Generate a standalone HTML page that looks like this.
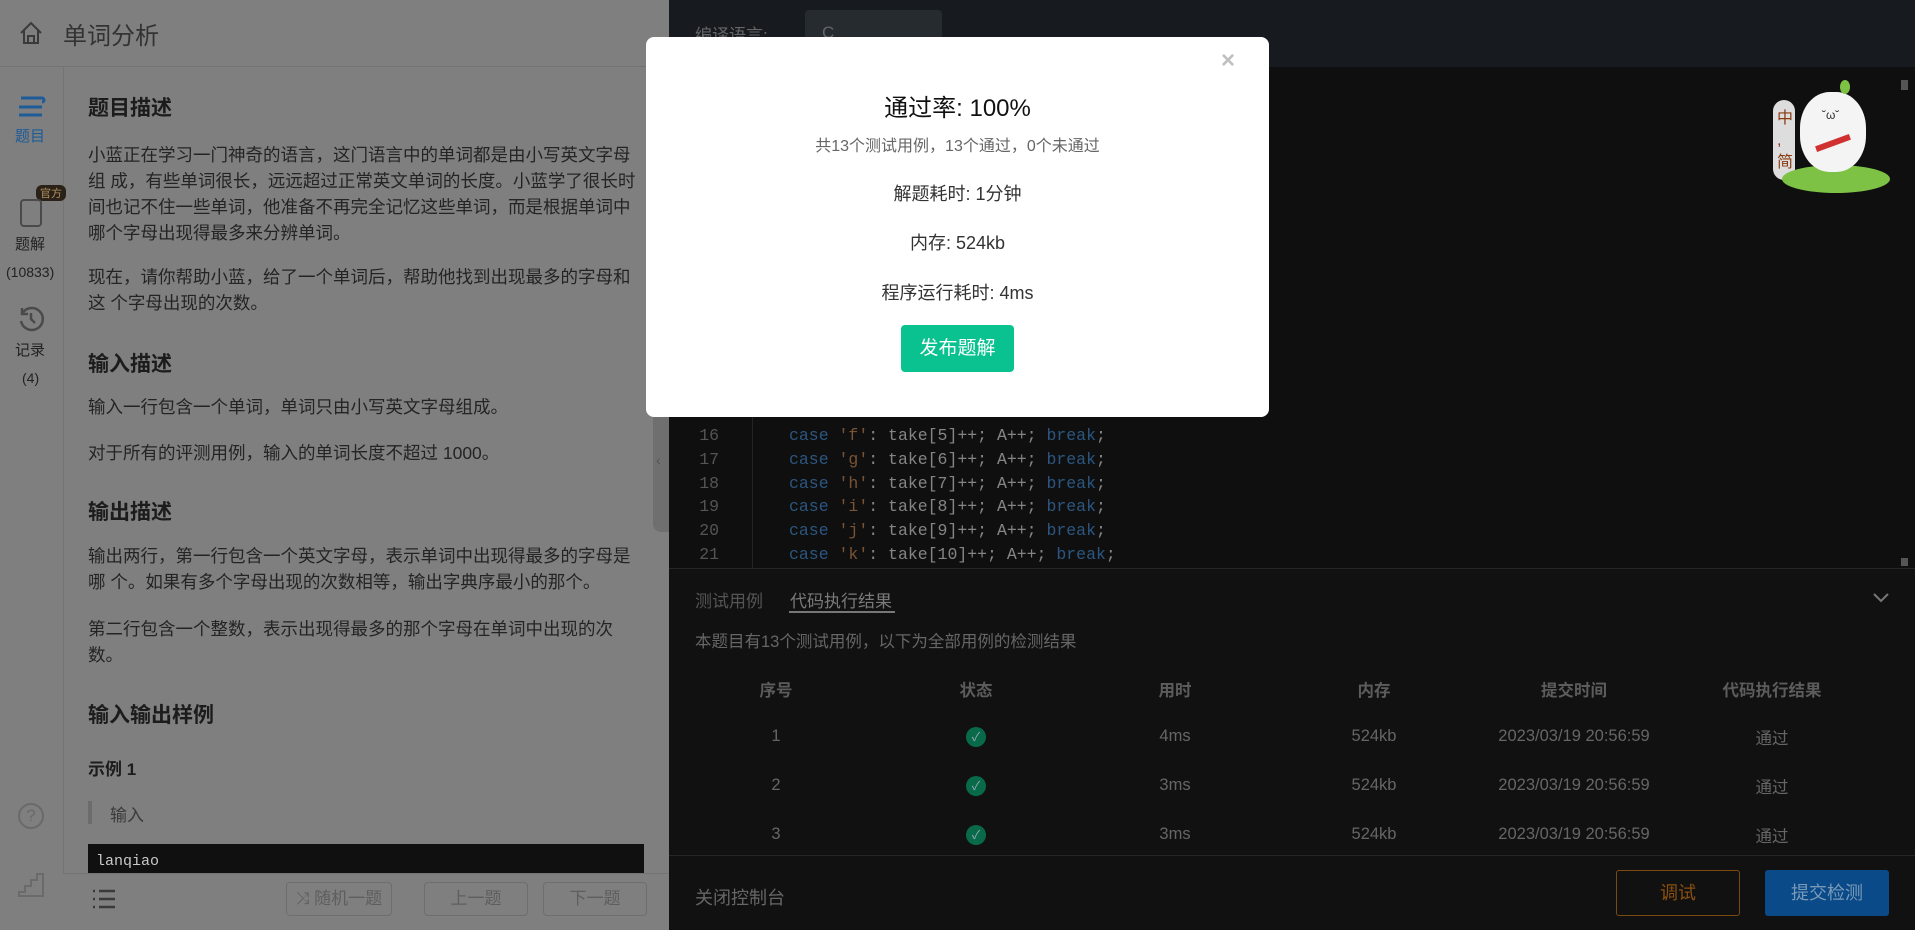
<!DOCTYPE html>
<html><head><meta charset="utf-8"><style>
*{margin:0;padding:0;box-sizing:border-box}
body{width:1915px;height:930px;overflow:hidden;background:#0f0f0f;font-family:"Liberation Sans","Noto Sans CJK SC",sans-serif;position:relative}
.a{position:absolute;white-space:nowrap}
#left{position:absolute;left:0;top:0;width:669px;height:930px;background:#7f7f7f}
.p{position:absolute;left:88px;font-size:17.5px;color:#242424;line-height:26px;white-space:nowrap}
.h{position:absolute;left:88px;font-size:21px;font-weight:bold;color:#1c1c1c}
.code{font-family:"Liberation Mono","DejaVu Sans Mono",monospace;font-size:16.5px;color:#858585}
.kw{color:#2c5680}.st{color:#7a5334}
.th{position:absolute;top:677px;font-size:16.5px;font-weight:bold;color:#5c5c5c;transform:translateX(-50%)}
.td{position:absolute;font-size:16.5px;color:#666;transform:translateX(-50%)}
.ok{position:absolute;width:20px;height:20px;border-radius:50%;background:#096a49;transform:translateX(-50%);color:#9ab;font-size:12px;text-align:center;line-height:20px}
.btn{position:absolute;top:882px;height:34px;border:1px solid #6e6e6e;border-radius:4px;color:#5e5e5e;font-size:17px;text-align:center;line-height:32px;background:#7f7f7f}
</style></head><body>
<div id="left">
 <div class="a" style="left:0;top:0;width:669px;height:67px;border-bottom:1px solid #737373"></div>
 <svg class="a" style="left:18px;top:20px" width="26" height="26" viewBox="0 0 26 26"><path d="M3 13 L13 3 L23 13 M6 10 V23 H20 V10 M10 23 V16 H16 V23" fill="none" stroke="#3a3a3a" stroke-width="2"/></svg>
 <div class="a" style="left:63px;top:16px;font-size:24px;color:#333">单词分析</div>
 <div class="a" style="left:63px;top:67px;width:1px;height:863px;background:#747474"></div>
 <svg class="a" style="left:16px;top:95px" width="30" height="24" viewBox="0 0 30 24"><path d="M5 3 H26 A2 2 0 0 1 26 7 M3 12 H26 M3 20 H26" stroke="#1d5c99" stroke-width="3" fill="none"/></svg>
 <div class="a" style="left:15px;top:125px;font-size:15px;color:#1d5c99">题目</div>
 <div class="a" style="left:36px;top:185px;font-size:11px;background:#2a2218;color:#b09060;border-radius:6px;padding:0 4px">官方</div>
 <div class="a" style="left:20px;top:199px;width:22px;height:28px;border:2px solid #4a4a4a;border-radius:4px"></div>
 <div class="a" style="left:15px;top:233px;font-size:15px;color:#222">题解</div>
 <div class="a" style="left:6px;top:264px;font-size:14px;color:#222">(10833)</div>
 <svg class="a" style="left:17px;top:305px" width="28" height="28" viewBox="0 0 28 28"><path d="M5 9 A11 11 0 1 1 4 16 M5 3 V9 H11 M14 8 V14 L18 18" fill="none" stroke="#4a4a4a" stroke-width="2.5"/></svg>
 <div class="a" style="left:15px;top:339px;font-size:15px;color:#222">记录</div>
 <div class="a" style="left:22px;top:370px;font-size:14px;color:#222">(4)</div>
 <div class="a" style="left:18px;top:803px;width:26px;height:26px;border:2px solid #6a6a6a;border-radius:50%;color:#6a6a6a;font-size:17px;text-align:center;line-height:22px">?</div>
 <svg class="a" style="left:17px;top:872px" width="28" height="26" viewBox="0 0 28 26"><path d="M2 24 H26 V2 H20 V8 H14 V14 H8 V20 H2 Z" fill="none" stroke="#6a6a6a" stroke-width="2"/></svg>

 <div class="h" style="top:92px">题目描述</div>
 <div class="p" style="top:142px">小蓝正在学习一门神奇的语言，这门语言中的单词都是由小写英文字母<br>组 成，有些单词很长，远远超过正常英文单词的长度。小蓝学了很长时<br>间也记不住一些单词，他准备不再完全记忆这些单词，而是根据单词中<br>哪个字母出现得最多来分辨单词。</div>
 <div class="p" style="top:264px">现在，请你帮助小蓝，给了一个单词后，帮助他找到出现最多的字母和<br>这 个字母出现的次数。</div>
 <div class="h" style="top:348px">输入描述</div>
 <div class="p" style="top:394px">输入一行包含一个单词，单词只由小写英文字母组成。</div>
 <div class="p" style="top:440px">对于所有的评测用例，输入的单词长度不超过 1000。</div>
 <div class="h" style="top:496px">输出描述</div>
 <div class="p" style="top:543px">输出两行，第一行包含一个英文字母，表示单词中出现得最多的字母是<br>哪 个。如果有多个字母出现的次数相等，输出字典序最小的那个。</div>
 <div class="p" style="top:616px">第二行包含一个整数，表示出现得最多的那个字母在单词中出现的次<br>数。</div>
 <div class="h" style="top:699px">输入输出样例</div>
 <div class="a" style="left:88px;top:755px;font-size:17px;font-weight:bold;color:#1c1c1c">示例 1</div>
 <div class="a" style="left:88px;top:801px;width:4px;height:23px;background:#6c6c6c"></div>
 <div class="a" style="left:110px;top:801px;font-size:17px;color:#3a3a3a">输入</div>
 <div class="a" style="left:88px;top:844px;width:556px;height:30px;background:#101010"></div>
 <div class="a code" style="left:96px;top:853px;font-size:15px;color:#c8c8c8">lanqiao</div>
 <div class="a" style="left:63px;top:873px;width:606px;height:57px;border-top:1px solid #737373;background:#7f7f7f"></div>
 <svg class="a" style="left:92px;top:889px" width="24" height="20" viewBox="0 0 24 20"><path d="M1 2h2M1 10h2M1 18h2M7 2h16M7 10h16M7 18h16" stroke="#3a3a3a" stroke-width="2.5"/></svg>
 <div class="btn" style="left:286px;width:106px">⤨ 随机一题</div>
 <div class="btn" style="left:424px;width:104px">上一题</div>
 <div class="btn" style="left:543px;width:104px">下一题</div>
 <div class="a" style="left:653px;top:400px;width:16px;height:132px;background:#6f6f6f;border-radius:8px 0 0 8px"></div>
 <div class="a" style="left:656px;top:452px;font-size:14px;color:#555">‹</div>
</div>

<div class="a" style="left:669px;top:0;width:1246px;height:67px;background:#171b1f"></div>
<div class="a" style="left:695px;top:21px;font-size:17px;color:#666">编译语言:</div>
<div class="a" style="left:805px;top:10px;width:137px;height:50px;background:#262b30;border-radius:4px"></div>
<div class="a" style="left:822px;top:23px;font-size:17px;color:#666">C</div>
<div class="a" style="left:752px;top:67px;width:1px;height:501px;background:#242424"></div>
<div class="a code" style="left:695px;top:424px;line-height:23.8px;color:#555;text-align:right;width:24px">16<br>17<br>18<br>19<br>20<br>21</div>
<div class="a code" style="left:789px;top:424px;line-height:23.8px"><span class="kw">case</span> <span class="st">'f'</span>: take[5]++; A++; <span class="kw">break</span>;<br><span class="kw">case</span> <span class="st">'g'</span>: take[6]++; A++; <span class="kw">break</span>;<br><span class="kw">case</span> <span class="st">'h'</span>: take[7]++; A++; <span class="kw">break</span>;<br><span class="kw">case</span> <span class="st">'i'</span>: take[8]++; A++; <span class="kw">break</span>;<br><span class="kw">case</span> <span class="st">'j'</span>: take[9]++; A++; <span class="kw">break</span>;<br><span class="kw">case</span> <span class="st">'k'</span>: take[10]++; A++; <span class="kw">break</span>;</div>
<div class="a" style="left:1901px;top:80px;width:7px;height:10px;background:#555"></div>
<div class="a" style="left:1901px;top:558px;width:7px;height:8px;background:#555"></div>
<!-- mascot -->
<div class="a" style="left:1773px;top:100px;width:22px;height:80px;background:#ddd;border-radius:11px"></div>
<div class="a" style="left:1777px;top:108px;font-size:16px;color:#8a3a10;line-height:22px">中<br>,<br>简</div>
<div class="a" style="left:1782px;top:165px;width:108px;height:28px;background:#7dc244;border-radius:50%"></div>
<div class="a" style="left:1800px;top:92px;width:66px;height:80px;background:#f4f4f4;border-radius:45%"></div>
<div class="a" style="left:1822px;top:108px;font-size:12px;color:#333">˘ω˘</div>
<div class="a" style="left:1840px;top:80px;width:10px;height:14px;background:#7dc244;border-radius:50%"></div>
<div class="a" style="left:1815px;top:140px;width:36px;height:6px;background:#d03030;transform:rotate(-20deg)"></div>

<div class="a" style="left:669px;top:568px;width:1246px;height:362px;background:#111;border-top:1px solid #262626"></div>
<div class="a" style="left:695px;top:587px;font-size:17px;color:#555">测试用例</div>
<div class="a" style="left:790px;top:587px;font-size:17px;color:#7a7a7a">代码执行结果</div>
<div class="a" style="left:789px;top:611px;width:106px;height:2px;background:#777"></div>
<svg class="a" style="left:1872px;top:592px" width="18" height="12" viewBox="0 0 18 12"><path d="M2 2 L9 9 L16 2" fill="none" stroke="#777" stroke-width="2"/></svg>
<div class="a" style="left:695px;top:628px;font-size:16.5px;color:#666">本题目有13个测试用例，以下为全部用例的检测结果</div>
<div class="th" style="left:776px">序号</div><div class="th" style="left:976px">状态</div><div class="th" style="left:1175px">用时</div><div class="th" style="left:1374px">内存</div><div class="th" style="left:1574px">提交时间</div><div class="th" style="left:1772px">代码执行结果</div>
<div class="td" style="left:776px;top:727px">1</div><div class="ok" style="left:976px;top:727px">✓</div><div class="td" style="left:1175px;top:727px">4ms</div><div class="td" style="left:1374px;top:727px">524kb</div><div class="td" style="left:1574px;top:727px">2023/03/19 20:56:59</div><div class="td" style="left:1772px;top:725px">通过</div>
<div class="td" style="left:776px;top:776px">2</div><div class="ok" style="left:976px;top:776px">✓</div><div class="td" style="left:1175px;top:776px">3ms</div><div class="td" style="left:1374px;top:776px">524kb</div><div class="td" style="left:1574px;top:776px">2023/03/19 20:56:59</div><div class="td" style="left:1772px;top:774px">通过</div>
<div class="td" style="left:776px;top:825px">3</div><div class="ok" style="left:976px;top:825px">✓</div><div class="td" style="left:1175px;top:825px">3ms</div><div class="td" style="left:1374px;top:825px">524kb</div><div class="td" style="left:1574px;top:825px">2023/03/19 20:56:59</div><div class="td" style="left:1772px;top:823px">通过</div>
<div class="a" style="left:669px;top:855px;width:1246px;height:75px;background:#111;border-top:1px solid #262626"></div>
<div class="a" style="left:695px;top:884px;font-size:18px;color:#666">关闭控制台</div>
<div class="a" style="left:1616px;top:870px;width:124px;height:46px;border:1px solid #7a4a10;border-radius:3px;color:#8a5010;font-size:18px;text-align:center;line-height:44px">调试</div>
<div class="a" style="left:1765px;top:870px;width:124px;height:46px;background:#0a4a88;border-radius:3px;color:#7a9ab8;font-size:18px;text-align:center;line-height:46px">提交检测</div>

<!-- modal -->
<div class="a" style="left:646px;top:37px;width:623px;height:380px;background:#fff;border-radius:8px"></div>
<div class="a" style="left:1221px;top:47px;font-size:24px;color:#c0c0c0;font-weight:bold">×</div>
<div class="a" style="left:646px;width:623px;text-align:center;top:88px;font-size:24px;color:#111">通过率: 100%</div>
<div class="a" style="left:646px;width:623px;text-align:center;top:132px;font-size:16px;color:#666">共13个测试用例，13个通过，0个未通过</div>
<div class="a" style="left:646px;width:623px;text-align:center;top:180px;font-size:18px;color:#333">解题耗时: 1分钟</div>
<div class="a" style="left:646px;width:623px;text-align:center;top:229px;font-size:18px;color:#333">内存: 524kb</div>
<div class="a" style="left:646px;width:623px;text-align:center;top:279px;font-size:18px;color:#333">程序运行耗时: 4ms</div>
<div class="a" style="left:901px;top:325px;width:113px;height:47px;background:#0ac190;border-radius:4px;color:#fff;font-size:19px;text-align:center;line-height:47px">发布题解</div>
</body></html>
